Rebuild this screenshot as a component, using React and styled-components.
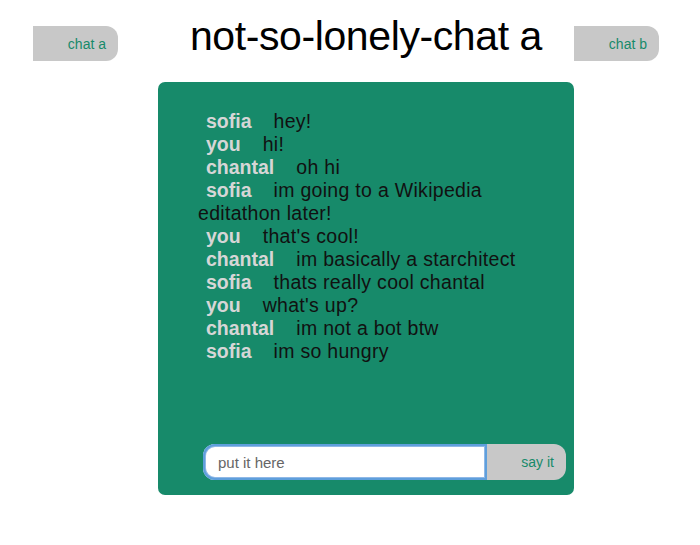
import styled, { createGlobalStyle } from 'styled-components';

const GlobalStyle = createGlobalStyle`
  html, body {
    margin: 0;
    padding: 0;
    background: #ffffff;
    font-family: "Liberation Sans", Arial, sans-serif;
  }
`;

const Page = styled.div`
  display: flex;
  align-items: flex-start;
  padding: 0 41px 0 33px;
  gap: 40px;
`;

const ChatTab = styled.button`
  flex: 0 0 85px;
  height: 35px;
  margin-top: 26px;
  margin-left: ${props => (props.$right ? '-40px' : '0')};
  border: none;
  border-radius: 0 12px 12px 0;
  background: #c8c8c8;
  color: #178a6a;
  font-family: "Liberation Sans", Arial, sans-serif;
  font-size: 14px;
  text-align: right;
  padding: 0 12px 0 0;
  cursor: pointer;
`;

const Center = styled.div`
  flex: 0 0 416px;
  display: flex;
  flex-direction: column;
`;

const Title = styled.h1`
  margin: 14px 0 0;
  height: 68px;
  font-size: 41px;
  font-weight: 400;
  line-height: 44px;
  text-align: center;
  color: #000;
  letter-spacing: -0.4px;
`;

const Panel = styled.div`
  height: 413px;
  background: #178a6a;
  border-radius: 7px;
  display: flex;
  flex-direction: column;
  padding: 28px 8px 15px 40px;
  box-sizing: border-box;
`;

const Messages = styled.div`
  flex: 1;
  width: 350px;
  font-size: 19.5px;
  line-height: 23px;
  letter-spacing: 0.3px;
  color: #111;
`;

const Message = styled.div``;

const Name = styled.span`
  margin-left: 8px;
  margin-right: 22px;
  font-weight: 700;
  letter-spacing: 0;
  color: #d6d6d6;
`;

const Form = styled.form`
  display: flex;
  margin-left: 5px;
  height: 36px;
`;

const Input = styled.input`
  flex: 1;
  border: none;
  border-radius: 12px 0 0 12px;
  outline: 2px solid #5f9fdc;
  outline-offset: -2px;
  box-shadow: inset 0 0 0 3px #8fb8e6;
  padding: 0 0 0 15px;
  font-family: "Liberation Sans", Arial, sans-serif;
  font-size: 15px;
  color: #222;
  &::placeholder {
    color: #666;
  }
`;

const SayIt = styled.button`
  flex: 0 0 79px;
  border: none;
  border-radius: 0 12px 12px 0;
  background: #c8c8c8;
  color: #178a6a;
  font-family: "Liberation Sans", Arial, sans-serif;
  font-size: 14px;
  text-align: right;
  padding: 0 12px 0 0;
`;

const messages = [
  ['sofia', 'hey!'],
  ['you', 'hi!'],
  ['chantal', 'oh hi'],
  ['sofia', 'im going to a Wikipedia editathon later!'],
  ['you', "that's cool!"],
  ['chantal', 'im basically a starchitect'],
  ['sofia', 'thats really cool chantal'],
  ['you', "what's up?"],
  ['chantal', 'im not a bot btw'],
  ['sofia', 'im so hungry'],
];

const App = () => (
  <>
    <GlobalStyle />
    <Page>
      <ChatTab>chat a</ChatTab>
      <Center>
        <Title>not-so-lonely-chat a</Title>
        <Panel>
          <Messages>
            {messages.map(([who, text], i) => (
              <Message key={i}>
                <Name>{who}</Name>
                {text}
              </Message>
            ))}
          </Messages>
          <Form onSubmit={e => e.preventDefault()}>
            <Input placeholder="put it here" autoFocus />
            <SayIt type="submit">say it</SayIt>
          </Form>
        </Panel>
      </Center>
      <ChatTab $right>chat b</ChatTab>
    </Page>
  </>
);

export default App;
